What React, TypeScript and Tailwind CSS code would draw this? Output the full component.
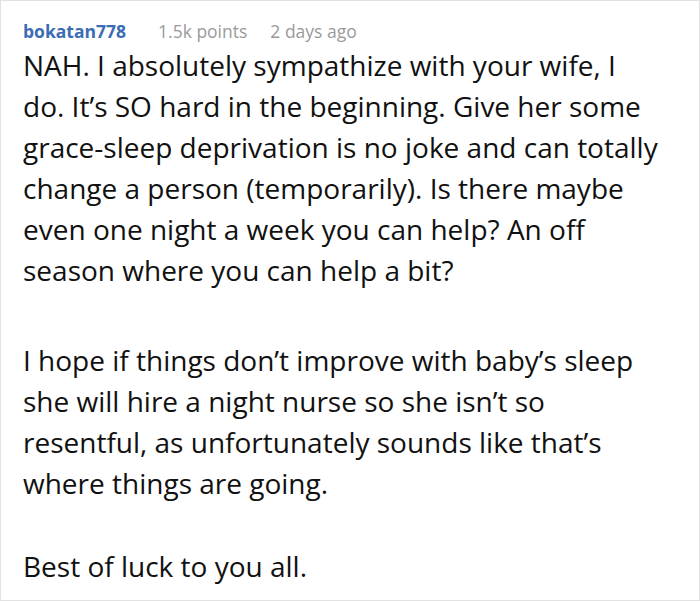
import React from 'react';

const paragraphs = [
  'NAH. I absolutely sympathize with your wife, I do. It’s SO hard in the beginning. Give her some grace-sleep deprivation is no joke and can totally change a person (temporarily). Is there maybe even one night a week you can help? An off season where you can help a bit?',
  'I hope if things don’t improve with baby’s sleep she will hire a night nurse so she isn’t so resentful, as unfortunately sounds like that’s where things are going.',
  'Best of luck to you all.',
];

export default function App() {
  return (
    <div className="w-[700px] h-[601px] overflow-hidden bg-white border border-[#e2e2e2] pl-[22px] pr-[37px] pt-[17px]" style={{ fontFamily: '"Open Sans", "Noto Sans", sans-serif' }}>
      <div className="flex items-baseline text-[17.5px] leading-[26px]">
        <span className="font-bold text-[#3b6cb4]">bokatan778</span>
        <span className="ml-[32px] text-[#9a9a9a]">1.5k points</span>
        <span className="ml-[23px] text-[#9a9a9a]">2 days ago</span>
      </div>
      <div className="mt-[1px] text-[28px] leading-[41px] text-[#111]">
        <p className="mb-[49px]">{paragraphs[0]}</p>
        <p className="mb-[42px]">{paragraphs[1]}</p>
        <p>{paragraphs[2]}</p>
      </div>
    </div>
  );
}
